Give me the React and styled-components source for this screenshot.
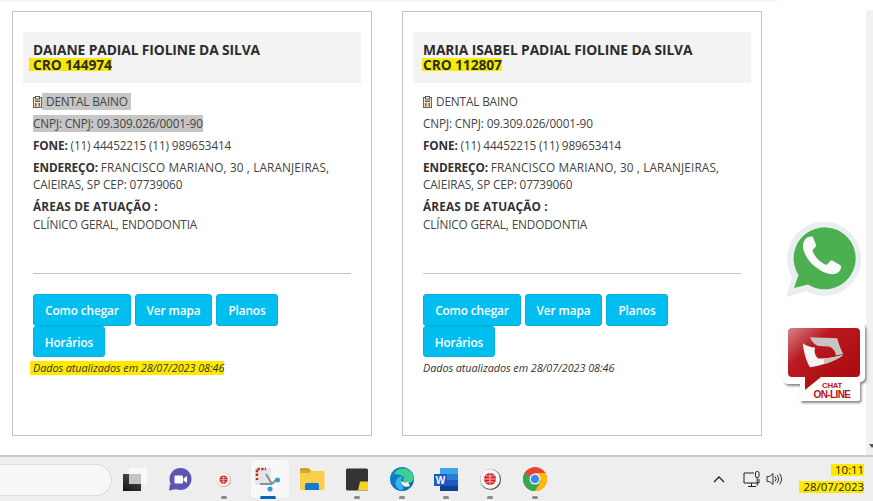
import React from 'react';
import styled, { createGlobalStyle } from 'styled-components';

const GlobalStyle = createGlobalStyle`
  html, body {
    margin: 0;
    padding: 0;
    height: 100%;
    overflow: hidden;
    background: #fff;
  }
  #root {
    height: 100%;
  }
`;

const Screen = styled.div`
  position: relative;
  width: 873px;
  height: 501px;
  display: flex;
  flex-direction: column;
  font-family: "Open Sans", "Noto Sans", "Liberation Sans", sans-serif;
  color: #333;
  overflow: hidden;
`;

const Viewport = styled.div`
  flex: 1;
  display: flex;
  min-height: 0;
`;

const Page = styled.div`
  flex: 1;
  min-width: 0;
`;

const TopStrip = styled.div`
  width: 777px;
  height: 2px;
  background: #f6f6f6;
`;

const Cards = styled.div`
  display: flex;
  gap: 30px;
  padding: 9px 0 0 12px;
`;

const Card = styled.section`
  box-sizing: border-box;
  width: 360px;
  height: 425px;
  border: 1px solid #c4c4c4;
  padding: 20px 10px 0;
`;

const Head = styled.header`
  box-sizing: border-box;
  height: 51px;
  background: #f3f3f3;
  padding: 10px 10px 0;
`;

const Name = styled.h2`
  margin: 0;
  font-size: 13.8px;
  line-height: 16px;
  font-weight: 700;
  color: #2c2c2c;
  letter-spacing: -0.1px;
  white-space: nowrap;
`;

const Cro = styled.mark`
  display: block;
  width: fit-content;
  font-size: 13.8px;
  line-height: 13px;
  font-weight: 700;
  color: #2c2c2c;
  letter-spacing: -0.1px;
  background: ${(p) => (p.$wide ? '#f7ea00' : '#f5ec00')};
  margin-left: ${(p) => (p.$wide ? '-4px' : '-1px')};
  padding-left: ${(p) => (p.$wide ? '4px' : '1px')};
`;

const Body = styled.div`
  padding: 9px 10px 0;
`;

const Line = styled.p`
  margin: 0 0 3px;
  font-size: 11.8px;
  line-height: 19px;
  letter-spacing: -0.15px;
  color: #444;
  white-space: nowrap;
`;

const Address = styled(Line)`
  line-height: 17px;
  margin-bottom: 4px;
  padding-top: 1px;
`;

const Street = styled.span`
  letter-spacing: 0.12px;
`;

const Selected = styled.span`
  display: inline-flex;
  align-items: center;
  background: ${(p) => (p.$on ? '#c6c6c6' : 'transparent')};
  height: 17px;
  padding: ${(p) => (p.$pad ? '0 3px 0 4px' : '0')};
`;

const Label = styled.b`
  font-weight: 700;
  color: #333;
`;

const AreaLabel = styled(Label)`
  letter-spacing: 0.15px;
`;

const AreaValue = styled(Line)`
  line-height: 18px;
`;

const Divider = styled.hr`
  border: 0;
  border-top: 1px solid #c4c4c4;
  margin: 40px 0 20px;
`;

const Buttons = styled.div`
  display: flex;
  flex-wrap: wrap;
  gap: 0 4px;
  width: 300px;
`;

const Action = styled.button`
  box-sizing: border-box;
  height: ${(p) => (p.$short ? '31px' : '32px')};
  background: #00bff0;
  border: 1px solid #00b0dd;
  border-radius: 3px;
  color: #fff;
  font-family: inherit;
  font-size: 11.8px;
  font-weight: 600;
  letter-spacing: -0.1px;
  padding: 0;
  width: ${(p) => p.$w}px;
`;

const Updated = styled.em`
  display: block;
  width: fit-content;
  margin-top: 4px;
  font-size: 10.8px;
  line-height: 14px;
  letter-spacing: -0.05px;
  color: #333;
  white-space: nowrap;
  background: ${(p) => (p.$marked ? '#ffe900' : 'transparent')};
  margin-left: ${(p) => (p.$marked ? '-3px' : '0')};
  padding-left: ${(p) => (p.$marked ? '3px' : '0')};
`;

const ScrollTrack = styled.div`
  width: 7px;
  background: #f1f1f1;
  margin-top: 10px;
  position: relative;
`;

const ScrollArrow = styled.span`
  position: absolute;
  left: 3px;
  bottom: 7px;
  width: 0;
  height: 0;
  border-left: 3px solid transparent;
  border-right: 3px solid transparent;
  border-top: 4px solid #555;
`;

const Floating = styled.a`
  position: absolute;
  display: block;
  left: ${(p) => p.$x}px;
  top: ${(p) => p.$y}px;
  line-height: 0;
`;

const Taskbar = styled.footer`
  box-sizing: border-box;
  height: 46px;
  flex: none;
  display: flex;
  align-items: center;
  background: #eeeeee;
  border-top: 2px solid #cbcbcb;
`;

const Search = styled.div`
  box-sizing: border-box;
  width: 112px;
  height: 32px;
  flex: none;
  margin-top: 2px;
  background: #f7f7f7;
  border: 1px solid #dedede;
  border-left: 0;
  border-radius: 0 16px 16px 0;
`;

const Apps = styled.div`
  display: flex;
  margin-left: 1px;
  align-items: center;
`;

const Slot = styled.div`
  position: relative;
  width: 44.4px;
  height: 44px;
  display: flex;
  align-items: center;
  justify-content: center;
`;

const ActiveTile = styled.span`
  position: absolute;
  left: 5px;
  top: 3px;
  width: 38px;
  height: 38px;
  background: #f8f8f8;
  border-radius: 4px;
  box-shadow: 0 0 1px #cfcfcf;
`;

const Pip = styled.span`
  position: absolute;
  bottom: 2px;
  left: 50%;
  transform: translateX(-50%);
  width: ${(p) => (p.$active ? '16px' : '6px')};
  height: 3px;
  border-radius: 2px;
  background: ${(p) => (p.$active ? '#0067c0' : '#8a8a8a')};
`;

const IconWrap = styled.span`
  position: relative;
  line-height: 0;
`;

const Tray = styled.div`
  margin-left: auto;
  display: flex;
  align-items: center;
`;

const TrayIcon = styled.span`
  line-height: 0;
  margin-right: ${(p) => p.$gap}px;
`;

const Clock = styled.div`
  display: flex;
  flex-direction: column;
  align-items: flex-end;
  margin-right: 9px;
  font-size: 11.4px;
  color: #222;
`;

const ClockTime = styled.span`
  background: #ffe900;
  padding-left: 4px;
  line-height: 12px;
  margin-top: -2px;
`;

const ClockDate = styled.span`
  background: #ffe900;
  padding-left: 5px;
  margin-top: 5px;
  line-height: 12px;
`;

const ClinicIcon = () => (
  <svg width="9" height="12" viewBox="0 0 9 12" style={{ verticalAlign: -2 }}>
    <rect x="0.5" y="1.5" width="8" height="10" fill="#f8e0c4" stroke="#6f6258" />
    <rect x="2.5" y="0.5" width="4" height="2.500" fill="#fff" stroke="#555" />
    <rect x="2" y="4.500" width="5" height="1.500" fill="#666" />
    <rect x="2" y="7" width="1.500" height="3.500" fill="#666" />
    <rect x="5.500" y="7" width="1.500" height="3.500" fill="#666" />
  </svg>
);

const WhatsApp = () => (
  <svg width="76" height="76" viewBox="0 0 76 76">
    <path d="M1 75 L7 55 A37 37 0 1 1 21 69 Z" fill="#e9eef0" />
    <path d="M9 66 L13.500 53 A31 31 0 1 1 23 62.500 Z" fill="#4caf50" />
    <path
      d="M23 15c-2 1-5 4-5 9 0 5 3 11 8 17 6 6 13 10 19 11 6 1 10-2 11-6 .4-1.500 0-2.500-1-3l-7-4c-1.500-.8-2.500-.5-3.300.5l-2 2.500c-.7.8-1.500.8-2.500.4-3-1.400-6-3.400-8-5.900-2-2.300-3.500-4.500-4.500-7-.4-1 0-1.700.7-2.400l2-2c.8-.9.8-1.800.4-2.900l-3-7.500C27 14.500 25.500 14 23 15z"
      fill="#fafafa"
    />
  </svg>
);

const ChatBadge = () => (
  <svg width="88" height="86" viewBox="0 0 88 86">
    <defs>
      <linearGradient id="chatRed" x1="0" y1="0" x2="0.75" y2="0.75">
        <stop offset="0" stopColor="#d5848a" />
        <stop offset="0.42" stopColor="#ba1a20" />
        <stop offset="1" stopColor="#ac0c12" />
      </linearGradient>
      <filter id="chatShadow" x="-10%" y="-10%" width="125%" height="125%">
        <feDropShadow dx="1.500" dy="2" stdDeviation="1" floodColor="#555" floodOpacity="0.7" />
      </filter>
    </defs>
    {/* white sticker outline */}
    <path
      d="M6 0h72a5 5 0 0 1 5 5v49a5 5 0 0 1-5 5v17a2 2 0 0 1-2 2H18v-17H6a5 5 0 0 1-5-5V5a5 5 0 0 1 5-5z"
      fill="#fff"
      filter="url(#chatShadow)"
    />
    {/* red bubble with its tail */}
    <path
      d="M10 5h64a4 4 0 0 1 4 4v41a4 4 0 0 1-4 4H39L23 67V54H10a4 4 0 0 1-4-4V9a4 4 0 0 1 4-4z"
      fill="url(#chatRed)"
    />
    <path d="M28 14.300L55.300 15.300C57 22 59 27 61.300 31L54 32.500C53 27 50 24 46 23.500L37 23C33 22.500 30 19 28 14.300z" fill="#c7c4c4" />
    <path d="M20.700 20.300C24 23 29 24.500 33 24.500C32 29 33 33 36 35.500C44 36 53 34 61.300 32C52 39 40 42 28 44.300C24 38 21.500 28 20.700 20.300z" fill="#f7f3f3" />
    <path d="M42 36L61.300 32C55 37 48 39.500 42 41z" fill="#c7c4c4" />
    <text x="50" y="65" fontFamily="Liberation Sans, sans-serif" fontSize="7.800" fontWeight="700" fill="#b5121b" textAnchor="middle" letterSpacing="-0.3">CHAT</text>
    <text x="50" y="74.500" fontFamily="Liberation Sans, sans-serif" fontSize="10" fontWeight="700" fill="#b5121b" textAnchor="middle" letterSpacing="-0.6">ON-LINE</text>
  </svg>
);

const TaskViewIcon = () => (
  <svg width="24" height="23" viewBox="0 0 24 23">
    <defs>
      <linearGradient id="viewDark" x1="0" y1="1" x2="0.5" y2="0">
        <stop offset="0" stopColor="#141414" />
        <stop offset="1" stopColor="#4a4a4a" />
      </linearGradient>
    </defs>
    <rect x="6" y="0" width="18" height="16" fill="#f8f8f8" />
    <rect x="0" y="6" width="18" height="17" fill="url(#viewDark)" />
    <rect x="6" y="6" width="12" height="10" fill="#c4c4c4" />
  </svg>
);

const MeetIcon = () => (
  <svg width="24" height="23" viewBox="0 0 24 23">
    <circle cx="12.500" cy="11" r="11" fill="#5b55b5" />
    <path d="M2 16l-1 6.500 8-1.500z" fill="#5b55b5" />
    <rect x="6.500" y="7.500" width="8.500" height="8" rx="1" fill="#fff" />
    <path d="M15.500 10.500l3.500-2.500v7l-3.500-2.500z" fill="#fff" />
  </svg>
);

const GlobeBadge = ({ size, shadow }) => (
  <svg width={size} height={size} viewBox="0 0 20 20">
    <circle cx="10.500" cy="10.500" r="9.500" fill={shadow ? '#555' : '#aaa'} />
    <circle cx="10" cy="10" r="9" fill="#f5f5f5" />
    <circle cx="10" cy="10" r="5.500" fill="#d6262c" />
    <path d="M4.500 10h11M10 4.500v11M6 6.500c2.500 1.500 5.500 1.500 8 0M6 13.500c2.500-1.500 5.500-1.500 8 0" stroke="#f5c6c6" strokeWidth="0.800" fill="none" />
  </svg>
);

const SnipIcon = () => (
  <svg width="26" height="26" viewBox="0 0 26 26">
    <rect x="0" y="2" width="16" height="17" fill="#e3e3ea" />
    <path d="M2 10V3h9" stroke="#c8321c" strokeWidth="2.500" strokeDasharray="2.500 1.200" fill="none" />
    <path d="M2 12v2" stroke="#c8321c" strokeWidth="2.500" fill="none" />
    <path d="M11 8l6 10M17 18l5-5M5 18h12" stroke="#8e8e8e" strokeWidth="2" fill="none" />
    <circle cx="22.500" cy="14" r="2.500" fill="#2b9fe0" />
    <circle cx="15" cy="23" r="2.500" fill="#2b9fe0" />
  </svg>
);

const FolderIcon = () => (
  <svg width="25" height="22" viewBox="0 0 25 22">
    <path d="M0 1.500A1.500 1.500 0 0 1 1.500 0h7l3 3H0z" fill="#c9a227" />
    <path d="M0 3h23.500a1 1 0 0 1 1 1v17a1 1 0 0 1-1 1H1a1 1 0 0 1-1-1z" fill="#f9cf4a" />
    <path d="M0 3h11l-2 2H0z" fill="#d7ab2d" />
    <path d="M5 22v-5.500a1.500 1.500 0 0 1 1.500-1.500h11a1.500 1.500 0 0 1 1.500 1.500V22z" fill="#0f7ad1" />
  </svg>
);

const StickyIcon = () => (
  <svg width="23" height="23" viewBox="0 0 23 23">
    <rect width="22" height="22" y="0.500" rx="1.500" fill="#333" />
    <path d="M12 22.500l2-9h8v7a2 2 0 0 1-2 2z" fill="#f5d327" />
  </svg>
);

const EdgeIcon = () => (
  <svg width="24" height="24" viewBox="0 0 24 24">
    <defs>
      <linearGradient id="edgeBlue" x1="0" y1="0" x2="1" y2="1">
        <stop offset="0" stopColor="#0c8ad6" />
        <stop offset="1" stopColor="#0b5fa8" />
      </linearGradient>
    </defs>
    <circle cx="12" cy="12" r="12" fill="url(#edgeBlue)" />
    <path d="M4 7C7 0 19-1 23 8c2 5-1 8-5 8-3 0-5-1-5-3 0-1 1-2 1-3-2-2-7-3-10-3z" fill="#3fd08f" />
    <path d="M11 14c0 5 5 7 9 5l-2-4c-2 1-5 0-7-1z" fill="#f1f1f1" />
    <path d="M10 23c-4-2-6-7-3-11 1-2 4-3 6-2-2 2-3 6 0 10 1 1 1 3-3 3z" fill="#35b6ec" />
  </svg>
);

const WordIcon = () => (
  <svg width="24" height="23" viewBox="0 0 24 23">
    <rect x="6" y="0" width="18" height="6" fill="#41a5ee" />
    <rect x="6" y="6" width="18" height="6" fill="#2b7cd3" />
    <rect x="6" y="12" width="18" height="6" fill="#185abd" />
    <rect x="6" y="18" width="18" height="5" fill="#103f91" />
    <rect x="0" y="6" width="13" height="12" fill="#1a5dbe" />
    <text x="6.500" y="16" fontFamily="Liberation Sans, sans-serif" fontSize="10" fontWeight="700" fill="#fff" textAnchor="middle">W</text>
  </svg>
);

const ChromeIcon = () => (
  <svg width="24" height="24" viewBox="0 0 24 24">
    <circle cx="12" cy="12" r="12" fill="#ea4335" />
    <path d="M12 12L1.600 6A12 12 0 0 0 12 24L18 13.500z" fill="#34a853" />
    <path d="M12 6h10.400A12 12 0 0 1 12 24l6-10.400z" fill="#fbbc04" />
    <circle cx="12" cy="12" r="5.500" fill="#fff" />
    <circle cx="12" cy="12" r="4.300" fill="#4285f4" />
  </svg>
);

const ChevronIcon = () => (
  <svg width="12" height="7" viewBox="0 0 12 7">
    <path d="M1 6l5-5 5 5" stroke="#222" strokeWidth="1.300" fill="none" />
  </svg>
);

const NetworkIcon = () => (
  <svg width="17" height="17" viewBox="0 0 17 17">
    <path d="M11 2H1v10h15V8" stroke="#222" fill="none" />
    <path d="M8.500 12v3M5 15.500h8" stroke="#222" fill="none" />
    <rect x="12.500" y="0.500" width="3.500" height="6" rx="1.500" stroke="#222" fill="#fff" />
    <path d="M14.200 6.500v8" stroke="#222" />
  </svg>
);

const SpeakerIcon = () => (
  <svg width="17" height="14" viewBox="0 0 17 14">
    <path d="M1 4.500h2.500L7 1.500v11L3.500 9.500H1z" stroke="#333" fill="none" />
    <path d="M9 4.500a3.500 3.500 0 0 1 0 5M11 3a6 6 0 0 1 0 8M13.500 1.500a8.500 8.500 0 0 1 0 11" stroke="#333" fill="none" />
  </svg>
);

const dentists = [
  { name: 'DAIANE PADIAL FIOLINE DA SILVA', cro: 'CRO 144974', marked: true },
  { name: 'MARIA ISABEL PADIAL FIOLINE DA SILVA', cro: 'CRO 112807', marked: false },
];

const actions = [
  { label: 'Como chegar', w: 98 },
  { label: 'Ver mapa', w: 77 },
  { label: 'Planos', w: 62 },
  { label: 'Horários', w: 72, short: true },
];

const apps = [
  { key: 'view', icon: <TaskViewIcon /> },
  { key: 'meet', icon: <MeetIcon /> },
  { key: 'rec', icon: <GlobeBadge size={15} />, pip: true },
  { key: 'snip', icon: <SnipIcon />, active: true },
  { key: 'files', icon: <FolderIcon /> },
  { key: 'notes', icon: <StickyIcon />, pip: true },
  { key: 'edge', icon: <EdgeIcon />, pip: true },
  { key: 'word', icon: <WordIcon />, pip: true },
  { key: 'globe', icon: <GlobeBadge size={22} shadow />, pip: true },
  { key: 'chrome', icon: <ChromeIcon />, pip: true },
];

const DentistCard = ({ name, cro, marked }) => (
  <Card>
    <Head>
      <Name>{name}</Name>
      <Cro $wide={marked}>{cro}</Cro>
    </Head>
    <Body>
      <Line>
        <ClinicIcon />
        <Selected $on={marked} $pad>DENTAL BAINO</Selected>
      </Line>
      <Line>
        <Selected $on={marked}>CNPJ: CNPJ: 09.309.026/0001-90</Selected>
      </Line>
      <Line>
        <Label>FONE:</Label> (11) 44452215 (11) 989653414
      </Line>
      <Address>
        <Label>ENDEREÇO:</Label> <Street>FRANCISCO MARIANO, 30 , LARANJEIRAS,</Street>
        <br />
        CAIEIRAS, SP CEP: 07739060
      </Address>
      <AreaValue>
        <AreaLabel>ÁREAS DE ATUAÇÃO :</AreaLabel>
        <br />
        CLÍNICO GERAL, ENDODONTIA
      </AreaValue>
      <Divider />
      <Buttons>
        {actions.map((a) => (
          <Action key={a.label} $w={a.w} $short={a.short}>{a.label}</Action>
        ))}
      </Buttons>
      <Updated $marked={marked}>Dados atualizados em 28/07/2023 08:46</Updated>
    </Body>
  </Card>
);

const App = () => (
  <Screen>
    <GlobalStyle />
    <Viewport>
      <Page>
        <TopStrip />
        <Cards>
          {dentists.map((d) => (
            <DentistCard key={d.cro} {...d} />
          ))}
        </Cards>
      </Page>
      <ScrollTrack>
        <ScrollArrow />
      </ScrollTrack>
    </Viewport>
    <Floating $x={785} $y={222}><WhatsApp /></Floating>
    <Floating $x={782} $y={323}><ChatBadge /></Floating>
    <Taskbar>
      <Search />
      <Apps>
        {apps.map((a) => (
          <Slot key={a.key}>
            {a.active && <ActiveTile />}
            <IconWrap>{a.icon}</IconWrap>
            {(a.pip || a.active) && <Pip $active={a.active} />}
          </Slot>
        ))}
      </Apps>
      <Tray>
        <TrayIcon $gap={18}><ChevronIcon /></TrayIcon>
        <TrayIcon $gap={6}><NetworkIcon /></TrayIcon>
        <TrayIcon $gap={16}><SpeakerIcon /></TrayIcon>
        <Clock>
          <ClockTime>10:11</ClockTime>
          <ClockDate>28/07/2023</ClockDate>
        </Clock>
      </Tray>
    </Taskbar>
  </Screen>
);

export default App;
